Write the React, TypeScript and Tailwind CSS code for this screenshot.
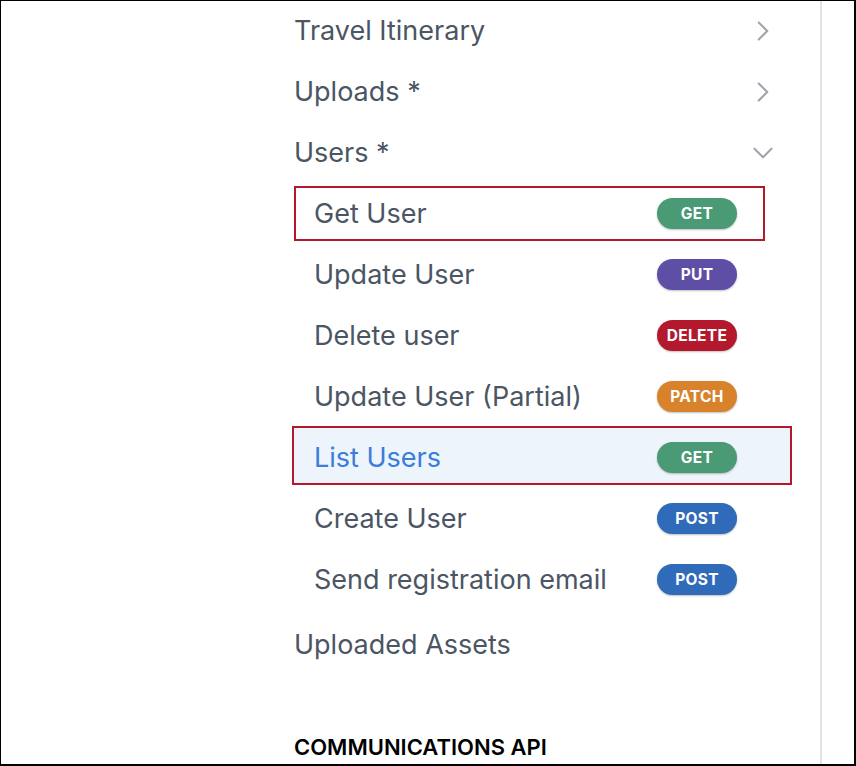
import { ChevronRight, ChevronDown } from "lucide-react";

type Method = "GET" | "PUT" | "DELETE" | "PATCH" | "POST";

const badgeColor: Record<Method, string> = {
  GET: "bg-[#4a9a75]",
  PUT: "bg-[#5e4ea6]",
  DELETE: "bg-[#b4182c]",
  PATCH: "bg-[#d8822b]",
  POST: "bg-[#2f6bb8]",
};

const endpoints: { name: string; method: Method; mark?: "box" | "active" }[] = [
  { name: "Get User", method: "GET", mark: "box" },
  { name: "Update User", method: "PUT" },
  { name: "Delete user", method: "DELETE" },
  { name: "Update User (Partial)", method: "PATCH" },
  { name: "List Users", method: "GET", mark: "active" },
  { name: "Create User", method: "POST" },
  { name: "Send registration email", method: "POST" },
];

function Badge({ method }: { method: Method }) {
  return (
    <span
      className={`flex h-[31px] w-[80px] shrink-0 items-center justify-center rounded-full text-[15.5px] font-bold tracking-[0.02em] text-white shadow-[0_1px_2px_rgba(0,0,0,0.25)] ${badgeColor[method]}`}
    >
      {method}
    </span>
  );
}

function Group({ label, open }: { label: string; open?: boolean }) {
  return (
    <div className="flex h-[61px] w-[486px] items-center justify-between">
      <span>{label}</span>
      {open ? (
        <ChevronDown className="h-[34px] w-[34px] text-[#a0a5ad]" strokeWidth={1.5} />
      ) : (
        <ChevronRight className="h-[34px] w-[34px] text-[#a0a5ad]" strokeWidth={1.5} />
      )}
    </div>
  );
}

export default function App() {
  return (
    <div className="flex h-[766px] w-[856px] overflow-hidden border-t border-l border-r-2 border-b-2 border-black bg-white font-['Inter',sans-serif] text-[27px] text-[#4b5563]">
      <div className="w-[293px] shrink-0" />
      <div className="flex w-[526px] shrink-0 flex-col">
        <Group label="Travel Itinerary" />
        <Group label="Uploads *" />
        <Group label="Users *" open />
        <div className="flex flex-col">
          {endpoints.map((e) => (
            <div key={e.name} className="flex h-[61px] items-center">
              {e.mark === "box" ? (
                <div className="flex h-[55px] w-[471px] items-center border-2 border-[#b3192b] pl-[18px] pr-[26px]">
                  <span className="flex-1">{e.name}</span>
                  <Badge method={e.method} />
                </div>
              ) : e.mark === "active" ? (
                <div className="-ml-[2px] mb-[4px] flex h-[59px] w-[500px] items-center border-2 border-[#b3192b] bg-[#edf4fc] pt-[4px] pl-[20px] pr-[53px] text-[#3b7dd8]">
                  <span className="flex-1">{e.name}</span>
                  <Badge method={e.method} />
                </div>
              ) : (
                <div className="flex w-[471px] items-center pl-[20px] pr-[28px]">
                  <span className="flex-1">{e.name}</span>
                  <Badge method={e.method} />
                </div>
              )}
            </div>
          ))}
        </div>
        <div className="mt-[5px] flex h-[61px] items-center">Uploaded Assets</div>
        <div className="mt-[55px] text-[22px] font-semibold uppercase text-black">
          Communications API
        </div>
      </div>
      <div className="w-[2px] shrink-0 bg-[#e3e3e3]" />
      <div className="flex-1" />
    </div>
  );
}
